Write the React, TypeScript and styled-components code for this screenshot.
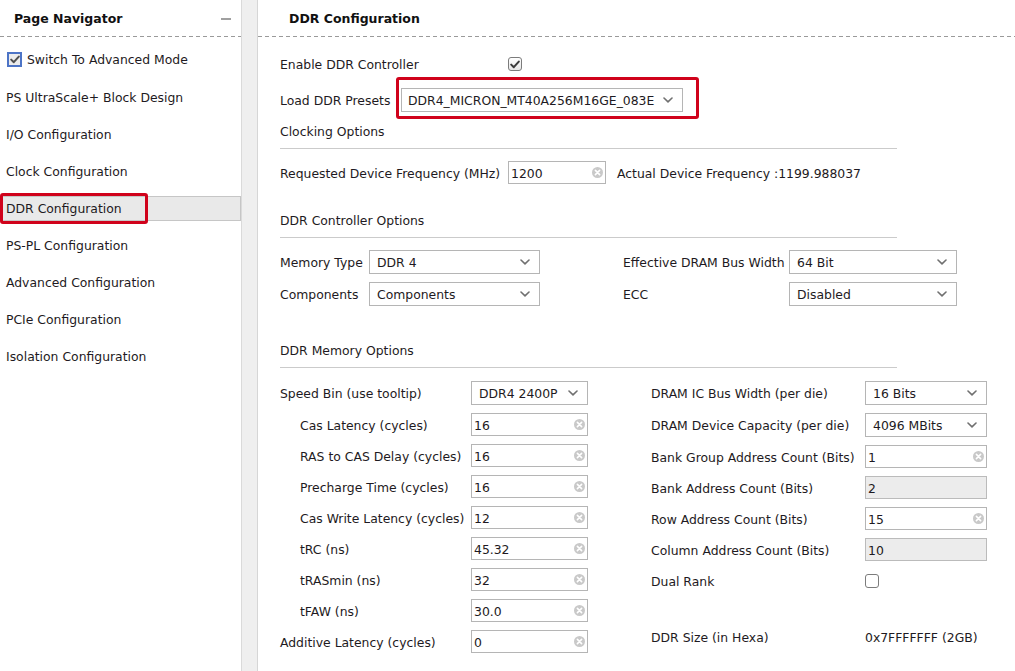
import React from "react";
import styled, { createGlobalStyle } from "styled-components";

const Global = createGlobalStyle`
  html, body { margin: 0; padding: 0; background: #fff; }
  body {
    font-family: "DejaVu Sans", Verdana, sans-serif;
    font-size: 12.4px;
    color: #1e1a22;
  }
  * { box-sizing: border-box; }
`;

const Shell = styled.div`
  display: flex;
  width: 1015px;
  height: 671px;
  overflow: hidden;
  background: #fff;
`;

const Sidebar = styled.aside`
  width: 242px;
  flex: none;
  border-right: 1px solid #dadada;
  display: flex;
  flex-direction: column;
`;

const Splitter = styled.div`
  width: 16px;
  flex: none;
  background: #efefef;
  border-right: 1px solid #d6d6d6;
`;

const Main = styled.main`
  flex: 1;
  min-width: 0;
  display: flex;
  flex-direction: column;
`;

const PanelHeader = styled.div<{ $pad: number }>`
  height: 37px;
  flex: none;
  display: flex;
  align-items: center;
  justify-content: space-between;
  padding: 0 10px 0 ${(p) => p.$pad}px;
  font-weight: bold;
  font-size: 12.5px;
  color: #111;
  background-image: repeating-linear-gradient(
    to right,
    #9a9a9a 0 4px,
    transparent 4px 7px
  );
  background-size: 100% 1px;
  background-repeat: no-repeat;
  background-position: 0 100%;
`;

const Minimize = styled.span`
  width: 10px;
  height: 2px;
  background: #a0a0a0;
`;

const NavList = styled.nav`
  display: flex;
  flex-direction: column;
  gap: 12px;
  padding-top: 10px;
`;

const NavItem = styled.div<{ $selected?: boolean }>`
  position: relative;
  height: 25px;
  display: flex;
  align-items: center;
  gap: 5px;
  padding-left: 6px;
  background: ${(p) => (p.$selected ? "#e9e9e9" : "transparent")};
  box-shadow: ${(p) => (p.$selected ? "inset 0 0 0 1px #c6c6c6" : "none")};
`;

const ModeItem = styled(NavItem)`
  padding-left: 7px;
  margin-bottom: 1px;
`;

const Highlight = styled.span<{ $w: number; $h: number }>`
  position: absolute;
  left: 0;
  top: -3px;
  width: ${(p) => p.$w}px;
  height: ${(p) => p.$h}px;
  border: 3px solid #d0021b;
  border-radius: 3px;
  pointer-events: none;
`;

const BlueCheck = styled.span`
  width: 15px;
  height: 15px;
  flex: none;
  border: 2px solid #4d74c6;
  background: #ececec;
  display: flex;
  align-items: center;
  justify-content: center;
`;

const GrayCheck = styled.span<{ $checked?: boolean }>`
  width: 14px;
  height: 14px;
  flex: none;
  border: 1px solid #7c7c7c;
  border-radius: 3px;
  background: ${(p) =>
    p.$checked ? "linear-gradient(#ffffff, #e6e6e6)" : "#ffffff"};
  display: flex;
  align-items: center;
  justify-content: center;
`;

const Content = styled.div`
  padding: 0 22px;
  display: flex;
  flex-direction: column;
`;

const Row = styled.div<{ $top: number; $h?: number }>`
  display: flex;
  align-items: center;
  margin-top: ${(p) => p.$top}px;
  height: ${(p) => (p.$h ? `${p.$h}px` : "auto")};
`;

const Label = styled.span<{ $w?: number; $indent?: number; $shift?: number }>`
  flex: none;
  width: ${(p) => (p.$w ? `${p.$w}px` : "auto")};
  padding-left: ${(p) => p.$indent ?? 0}px;
  padding-top: 1px;
  margin-top: ${(p) => p.$shift ?? 0}px;
  white-space: nowrap;
`;

const RedFrame = styled.div`
  border: 3px solid #d0021b;
  border-radius: 3px;
  padding: 8px 13px 4px 2px;
`;

const SectionTitle = styled.div<{ $top: number }>`
  margin-top: ${(p) => p.$top}px;
  width: 617px;
  line-height: 16px;
  padding-bottom: 8px;
  border-bottom: 1px solid #cbcbcb;
`;

const SelectBox = styled.div<{ $w: number; $pad?: number }>`
  width: ${(p) => p.$w}px;
  height: 24px;
  flex: none;
  display: flex;
  align-items: center;
  justify-content: space-between;
  padding: 0 9px 0 ${(p) => p.$pad ?? 7}px;
  border: 1px solid #b5b5b5;
  background: #fff;
  white-space: nowrap;
`;

const InputBox = styled.div<{ $w: number; $disabled?: boolean }>`
  width: ${(p) => p.$w}px;
  height: 23px;
  flex: none;
  display: flex;
  align-items: center;
  justify-content: space-between;
  padding: 0 2px 0 2px;
  border: 1px solid ${(p) => (p.$disabled ? "#bbbbbb" : "#b5b5b5")};
  background: ${(p) => (p.$disabled ? "#ececec" : "#fff")};
`;

const Aside = styled.span`
  margin-left: 11px;
  padding-top: 1px;
  white-space: nowrap;
`;

const ControllerGrid = styled.div`
  margin-top: 12px;
  display: grid;
  grid-template-columns: 89px 171px 83px 166px 168px;
  grid-auto-rows: 24px;
  row-gap: 8px;
  align-items: center;
`;

const MemoryArea = styled.div`
  margin-top: 13px;
  display: flex;
  gap: 63px;
  align-items: flex-start;
`;

const Column = styled.div`
  display: flex;
  flex-direction: column;
  gap: 8px;
`;

const FieldRow = styled.div<{ $h?: number }>`
  display: flex;
  align-items: center;
  height: ${(p) => p.$h ?? 23}px;
`;

const Value = styled.span`
  padding-top: 1px;
`;

const Spacer = styled.div<{ $h: number }>`
  height: ${(p) => p.$h}px;
`;

const Chevron = () => (
  <svg width="10" height="6" viewBox="0 0 10 6">
    <path
      d="M1 1 L5 4.8 L9 1"
      fill="none"
      stroke="#707070"
      strokeWidth="1.6"
      strokeLinecap="round"
      strokeLinejoin="round"
    />
  </svg>
);

const ClearIcon = () => (
  <svg width="11" height="11" viewBox="0 0 11 11">
    <circle cx="5.5" cy="5.5" r="5.5" fill="#c9c9c9" />
    <path
      d="M3.4 3.4 L7.6 7.6 M7.6 3.4 L3.4 7.6"
      stroke="#fff"
      strokeWidth="1.6"
      strokeLinecap="round"
    />
  </svg>
);

const CheckMark = ({ color = "#3a3a3a" }: { color?: string }) => (
  <svg width="10" height="9" viewBox="0 0 10 9">
    <path
      d="M1.2 4.6 L3.8 7.2 L8.8 1.6"
      fill="none"
      stroke={color}
      strokeWidth="2"
      strokeLinecap="round"
      strokeLinejoin="round"
    />
  </svg>
);

const Select = ({ w, value, pad }: { w: number; value: string; pad?: number }) => (
  <SelectBox $w={w} $pad={pad}>
    <Value>{value}</Value>
    <Chevron />
  </SelectBox>
);

const Input = ({ w, value, disabled }: { w: number; value: string; disabled?: boolean }) => (
  <InputBox $w={w} $disabled={disabled}>
    <Value>{value}</Value>
    {!disabled && <ClearIcon />}
  </InputBox>
);

const navItems = [
  "PS UltraScale+ Block Design",
  "I/O Configuration",
  "Clock Configuration",
  "DDR Configuration",
  "PS-PL Configuration",
  "Advanced Configuration",
  "PCIe Configuration",
  "Isolation Configuration",
];

type LeftField = { label: string; indent: number; kind: "select" | "input"; value: string };

const leftFields: LeftField[] = [
  { label: "Speed Bin (use tooltip)", indent: 0, kind: "select", value: "DDR4 2400P" },
  { label: "Cas Latency (cycles)", indent: 20, kind: "input", value: "16" },
  { label: "RAS to CAS Delay (cycles)", indent: 20, kind: "input", value: "16" },
  { label: "Precharge Time (cycles)", indent: 20, kind: "input", value: "16" },
  { label: "Cas Write Latency (cycles)", indent: 20, kind: "input", value: "12" },
  { label: "tRC (ns)", indent: 20, kind: "input", value: "45.32" },
  { label: "tRASmin (ns)", indent: 20, kind: "input", value: "32" },
  { label: "tFAW (ns)", indent: 20, kind: "input", value: "30.0" },
  { label: "Additive Latency (cycles)", indent: 0, kind: "input", value: "0" },
];

export default function App() {
  return (
    <>
      <Global />
      <Shell>
        <Sidebar>
          <PanelHeader $pad={14}>
            <span>Page Navigator</span>
            <Minimize />
          </PanelHeader>
          <NavList>
            <ModeItem>
              <BlueCheck>
                <CheckMark color="#505050" />
              </BlueCheck>
              <span>Switch To Advanced Mode</span>
            </ModeItem>
            {navItems.map((item) => {
              const selected = item === "DDR Configuration";
              return (
                <NavItem key={item} $selected={selected}>
                  <span>{item}</span>
                  {selected && <Highlight $w={148} $h={31} />}
                </NavItem>
              );
            })}
          </NavList>
        </Sidebar>
        <Splitter />
        <Main>
          <PanelHeader $pad={31}>
            <span>DDR Configuration</span>
          </PanelHeader>
          <Content>
            <Row $top={15} $h={24}>
              <Label $w={228}>Enable DDR Controller</Label>
              <GrayCheck $checked>
                <CheckMark />
              </GrayCheck>
            </Row>
            <Row $top={1}>
              <Label $w={116} $shift={4}>
                Load DDR Presets
              </Label>
              <RedFrame>
                <Select w={282} value="DDR4_MICRON_MT40A256M16GE_083E" pad={6} />
              </RedFrame>
            </Row>

            <SectionTitle $top={5}>Clocking Options</SectionTitle>
            <Row $top={12} $h={23}>
              <Label $w={228}>Requested Device Frequency (MHz)</Label>
              <Input w={98} value="1200" />
              <Aside>Actual Device Frequency :1199.988037</Aside>
            </Row>

            <SectionTitle $top={29}>DDR Controller Options</SectionTitle>
            <ControllerGrid>
              <Label>Memory Type</Label>
              <Select w={171} value="DDR 4" />
              <span />
              <Label>Effective DRAM Bus Width</Label>
              <Select w={168} value="64 Bit" />
              <Label>Components</Label>
              <Select w={171} value="Components" />
              <span />
              <Label>ECC</Label>
              <Select w={168} value="Disabled" />
            </ControllerGrid>

            <SectionTitle $top={37}>DDR Memory Options</SectionTitle>
            <MemoryArea>
              <Column>
                {leftFields.map((f) => (
                  <FieldRow key={f.label} $h={f.kind === "select" ? 24 : 23}>
                    <Label $w={191} $indent={f.indent}>
                      {f.label}
                    </Label>
                    {f.kind === "select" ? (
                      <Select w={117} value={f.value} />
                    ) : (
                      <Input w={117} value={f.value} />
                    )}
                  </FieldRow>
                ))}
              </Column>
              <Column>
                <FieldRow $h={24}>
                  <Label $w={214}>DRAM IC Bus Width (per die)</Label>
                  <Select w={122} value="16 Bits" />
                </FieldRow>
                <FieldRow $h={24}>
                  <Label $w={214}>DRAM Device Capacity (per die)</Label>
                  <Select w={122} value="4096 MBits" />
                </FieldRow>
                <FieldRow>
                  <Label $w={214}>Bank Group Address Count (Bits)</Label>
                  <Input w={122} value="1" />
                </FieldRow>
                <FieldRow>
                  <Label $w={214}>Bank Address Count (Bits)</Label>
                  <Input w={122} value="2" disabled />
                </FieldRow>
                <FieldRow>
                  <Label $w={214}>Row Address Count (Bits)</Label>
                  <Input w={122} value="15" />
                </FieldRow>
                <FieldRow>
                  <Label $w={214}>Column Address Count (Bits)</Label>
                  <Input w={122} value="10" disabled />
                </FieldRow>
                <FieldRow>
                  <Label $w={214}>Dual Rank</Label>
                  <GrayCheck />
                </FieldRow>
                <Spacer $h={17} />
                <FieldRow>
                  <Label $w={214}>DDR Size (in Hexa)</Label>
                  <Value>0x7FFFFFFF (2GB)</Value>
                </FieldRow>
              </Column>
            </MemoryArea>
          </Content>
        </Main>
      </Shell>
    </>
  );
}
